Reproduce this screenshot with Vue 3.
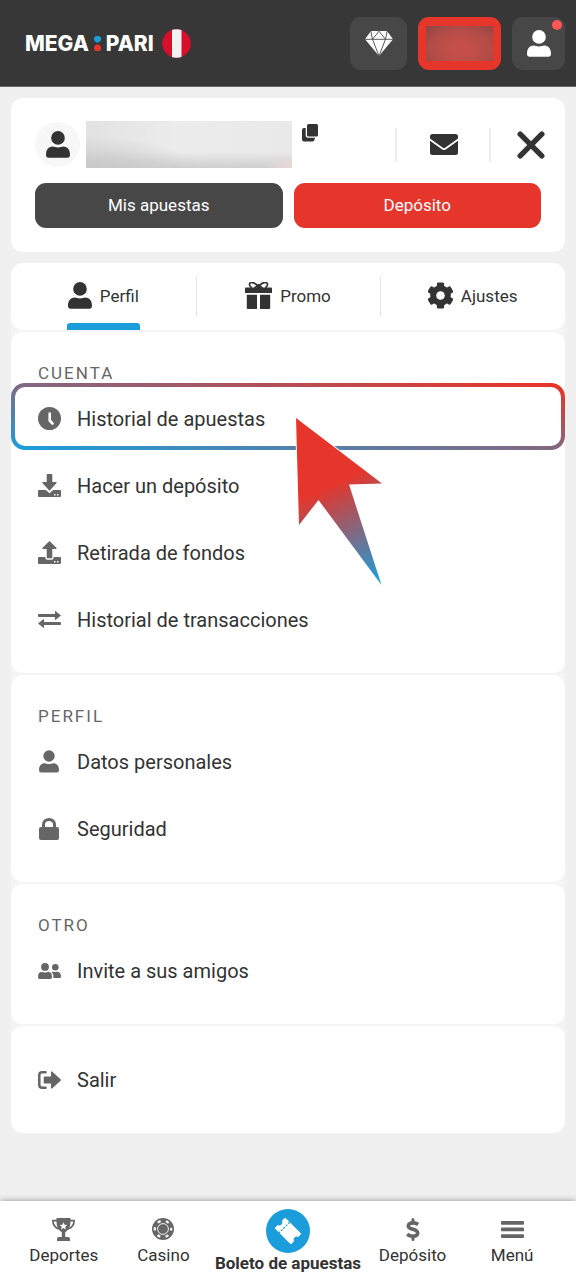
<script setup>
import { ref } from 'vue'

const tabs = [
  { id: 'perfil', label: 'Perfil', icon: 'user', w: 24, h: 27 },
  { id: 'promo', label: 'Promo', icon: 'gift', w: 27, h: 27 },
  { id: 'ajustes', label: 'Ajustes', icon: 'gear', w: 25, h: 27 },
]
const activeTab = ref('perfil')

const sections = [
  {
    title: 'CUENTA',
    items: [
      { label: 'Historial de apuestas', icon: 'clock', w: 23, h: 23, marked: true },
      { label: 'Hacer un depósito', icon: 'download', w: 23, h: 23 },
      { label: 'Retirada de fondos', icon: 'upload', w: 23, h: 23 },
      { label: 'Historial de transacciones', icon: 'swap', w: 23, h: 17 },
    ],
  },
  {
    title: 'PERFIL',
    items: [
      { label: 'Datos personales', icon: 'user', w: 20, h: 23 },
      { label: 'Seguridad', icon: 'lock', w: 20, h: 22 },
    ],
  },
  {
    title: 'OTRO',
    items: [{ label: 'Invite a sus amigos', icon: 'friends', w: 23, h: 16 }],
  },
  {
    title: '',
    items: [{ label: 'Salir', icon: 'exit', w: 23, h: 18 }],
  },
]

const nav = [
  { label: 'Deportes', icon: 'trophy', w: 23, h: 23 },
  { label: 'Casino', icon: 'chip', w: 22, h: 22 },
  { label: 'Boleto de apuestas', icon: 'ticket', w: 26, h: 26, main: true },
  { label: 'Depósito', icon: 'dollar', w: 14, h: 23 },
  { label: 'Menú', icon: 'menu', w: 23, h: 17 },
]
</script>

<template>
  <div class="page">
    <svg class="defs" aria-hidden="true">
      <symbol id="i-user" viewBox="0 0 24 27">
        <circle cx="12" cy="6.9" r="6.8" fill="currentColor" />
        <path fill="currentColor" d="M0 23.6C0 18.400 3 15.600 6.600 15.600c2 0 3 1 5.400 1s3.400-1 5.400-1C21 15.600 24 18.400 24 23.600q0 3.200-2.600 3.200H2.600Q0 26.800 0 23.600z" />
      </symbol>
      <symbol id="i-diamond" viewBox="0 0 28 25">
        <path fill="currentColor" d="M6 0h16l6 8.300L14 25 0 8.300z" />
        <path fill="none" stroke="#474747" stroke-width=".9" d="M0 8.300h28M7.500 8.300 14 25l6.500-16.700L14 .2zM5.800 0l1.700 8.300M22.200 0l-1.700 8.300" />
      </symbol>
      <symbol id="i-copy" viewBox="0 0 16 18">
        <rect x="5" y="0" width="11" height="12.500" rx="1.500" fill="currentColor" />
        <path fill="currentColor" d="M3.700 4H2Q0 4 0 6v9.500q0 2 2 2h8.500q2 0 2.500-3.700H6q-2.300 0-2.300-2.300z" />
      </symbol>
      <symbol id="i-mail" viewBox="0 0 28 21">
        <path fill="currentColor" d="M2.500 0h23Q28 0 28 2.500v2L15.500 13.500q-1.500 1-3 0L0 4.500v-2Q0 0 2.500 0z" />
        <path fill="currentColor" d="M0 6.700 11.500 15q2.500 1.800 5 0L28 6.700v11.800q0 2.500-2.500 2.500h-23Q0 21 0 18.500z" />
      </symbol>
      <symbol id="i-close" viewBox="0 0 28 28">
        <path fill="none" stroke="currentColor" stroke-width="5.400" stroke-linecap="round" d="M3.200 3.200l21.600 21.600M24.800 3.200 3.200 24.800" />
      </symbol>
      <symbol id="i-gift" viewBox="0 0 27 27">
        <path fill="none" stroke="currentColor" stroke-width="1.700" d="M13.500 5.500C11.500.5 5.500-.6 4.600 1.800c-.7 1.800 1.400 3.200 1.900 3.900M13.500 5.500c2-5 8-6.100 8.900-3.700.7 1.800-1.400 3.200-1.900 3.900M9.500 6l4-3 4 3" />
        <circle cx="13.500" cy="4.600" r="2" fill="currentColor" />
        <path fill="currentColor" d="M1 5.500h25q1 0 1 1V11H0V6.500q0-1 1-1zM1.800 12.800h10.200V27H2.800q-1 0-1-1zM15 12.800h10.200V26q0 1-1 1H15z" />
      </symbol>
      <symbol id="i-gear" viewBox="0 0 25 27">
        <g fill="currentColor">
          <circle cx="12.500" cy="13.500" r="10.300" />
          <rect x="8.900" y=".4" width="7.200" height="26.200" rx="1.400" />
          <rect x="8.900" y=".4" width="7.200" height="26.200" rx="1.400" transform="rotate(60 12.500 13.500)" />
          <rect x="8.900" y=".4" width="7.200" height="26.200" rx="1.400" transform="rotate(120 12.500 13.500)" />
        </g>
        <circle cx="12.500" cy="13.500" r="4.300" fill="#fff" />
      </symbol>
      <symbol id="i-clock" viewBox="0 0 23 23">
        <circle cx="11.500" cy="11.500" r="11.500" fill="currentColor" />
        <path fill="none" stroke="#fff" stroke-width="2.600" stroke-linecap="round" stroke-linejoin="round" d="M11.700 6.500v7l2.800 3" />
      </symbol>
      <symbol id="i-download" viewBox="0 0 23 23">
        <path fill="currentColor" d="M9.500 0h4q.8 0 .8.800V8H18q1.200 0 .4 1.200l-6.900 7.500-6.900-7.500Q3.800 8 5 8h3.700V.8q0-.8.800-.8z" />
        <path fill="currentColor" fill-rule="evenodd" d="M1 16h6.800l3.700 3.300 3.700-3.300H22q1 0 1 1v5q0 1-1 1H1q-1 0-1-1v-5q0-1 1-1zM16 20v1.500h1.500V20zM19 20v1.500h1.500V20z" />
      </symbol>
      <symbol id="i-upload" viewBox="0 0 23 23">
        <path fill="currentColor" d="M11.500 0l6.900 6.700Q19 8 18 8h-3.700v8q0 1.200-.8 1.200h-4q-.8 0-.8-1.200V8H5Q4 8 4.600 6.700z" />
        <path fill="currentColor" fill-rule="evenodd" d="M1 16h6.300q0 2.800 1.700 2.800h5q1.700 0 1.700-2.800H22q1 0 1 1v5q0 1-1 1H1q-1 0-1-1v-5q0-1 1-1zM16 20v1.500h1.500V20zM19 20v1.500h1.500V20z" />
      </symbol>
      <symbol id="i-swap" viewBox="0 0 23 17">
        <path fill="currentColor" d="M.8 3H17V.8q0-1.200 1-.4l5 4.100-5 4.100q-1 .8-1-.4V6H.8Q0 6 0 5.200V3.800Q0 3 .8 3zM22.200 11H6V8.800q0-1.200-1-.4l-5 4.100 5 4.100q1 .8 1-.4V14h16.200q.8 0 .8-.8v-1.400q0-.8-.8-.8z" />
      </symbol>
      <symbol id="i-lock" viewBox="0 0 20 22">
        <path fill="none" stroke="currentColor" stroke-width="3" d="M4.500 10V6.500a5.500 5 0 0 1 11 0V10" />
        <rect y="9" width="20" height="13" rx="2" fill="currentColor" />
      </symbol>
      <symbol id="i-friends" viewBox="0 0 23 16">
        <circle cx="7" cy="3.900" r="3.900" fill="currentColor" />
        <circle cx="17.300" cy="4.300" r="3.300" fill="currentColor" />
        <path fill="currentColor" d="M0 14q0-5 3.500-5c1.500 0 2 .5 3.500.5s2-.5 3.500-.5Q14 9 14 14q0 2-1.500 2h-11Q0 16 0 14zM13.500 9c1.500-.7 2.200 0 3.800 0s2-.3 3-.1Q23 9.700 23 13.500q0 1.500-1 1.500h-6.700q.6-3.800-1.800-6z" />
      </symbol>
      <symbol id="i-exit" viewBox="0 0 23 18">
        <path fill="none" stroke="currentColor" stroke-width="2.500" stroke-linecap="round" d="M7.500 1.300H4Q1.300 1.300 1.300 4v10q0 2.700 2.700 2.700h3.500" />
        <path fill="currentColor" d="M6.500 5.500H13V1.400q0-1.800 1.300-.6l8 7.200q1 1 0 2l-8 7.200q-1.300 1.200-1.300-.6v-4.100H6.500q-.8 0-.8-.8V6.300q0-.8.800-.8z" />
      </symbol>
      <symbol id="i-trophy" viewBox="0 0 23 23">
        <path fill="none" stroke="currentColor" stroke-width="1.700" d="M5 2.600H.9C.9 7 2.600 9.800 7 11M18 2.600h4.100c0 4.400-1.700 7.200-6.100 8.400" />
        <path fill="currentColor" d="M4.500 0h14v3.500c0 5-1.600 8.500-5.300 10.700V19h3q1.800 0 1.800 1.800V23H5v-2.200Q5 19 6.800 19h3v-4.800C6.100 12 4.500 8.500 4.500 3.500z" />
        <path fill="#fff" d="m11.500 4.200 1.100 2.500 2.700.3-2 1.800.6 2.700-2.400-1.400-2.400 1.400.6-2.700-2-1.800 2.700-.3z" />
      </symbol>
      <symbol id="i-chip" viewBox="0 0 22 22">
        <circle cx="11" cy="11" r="11" fill="currentColor" />
        <circle cx="11" cy="11" r="8.200" fill="none" stroke="#fff" stroke-width="2.200" stroke-dasharray="3.200 5.390" stroke-dashoffset="1.600" />
        <circle cx="11" cy="11" r="5.400" fill="none" stroke="#fff" stroke-width=".9" />
      </symbol>
      <symbol id="i-ticket" viewBox="0 0 26 26">
        <g transform="rotate(45 13 13)">
          <path fill="currentColor" d="M1.500 5.500h23v4.600a3 3 0 0 0 0 5.800v4.600h-23v-4.600a3 3 0 0 0 0-5.800z" />
          <path fill="none" stroke="#1c9ddb" stroke-width="1.200" stroke-dasharray="2.200 1.200" d="M8 5.500v15" />
        </g>
      </symbol>
      <symbol id="i-dollar" viewBox="0 0 14 23">
        <path fill="none" stroke="currentColor" stroke-width="3.600" d="M12.200 6.400Q9.800 4.900 7 4.900C4 4.900 2.300 6 2.300 7.900c0 4.500 9.400 2.400 9.400 7.100 0 2.100-1.900 3.200-4.700 3.200q-3.300 0-5.900-2" />
        <path fill="none" stroke="currentColor" stroke-width="3" stroke-linecap="round" d="M7 1.500v3M7 18.500v3" />
      </symbol>
      <symbol id="i-menu" viewBox="0 0 23 17">
        <g fill="currentColor">
          <rect width="23" height="3.700" rx=".9" />
          <rect y="6.600" width="23" height="3.700" rx=".9" />
          <rect y="13.200" width="23" height="3.700" rx=".9" />
        </g>
      </symbol>
    </svg>

    <header class="top">
      <a class="logo" href="#" aria-label="Megapari">
        <span>MEGA</span>
        <i class="dots" aria-hidden="true"></i>
        <span>PARI</span>
        <svg class="flag" width="29" height="29" viewBox="0 0 29 29" aria-hidden="true">
          <clipPath id="flag-round"><circle cx="14.500" cy="14.500" r="14.300" /></clipPath>
          <g clip-path="url(#flag-round)">
            <rect width="29" height="29" fill="#d80e2b" />
            <rect x="10" width="9.500" height="29" fill="#f2f2f2" />
          </g>
        </svg>
      </a>
      <div class="top-actions">
        <button class="tile diamond" aria-label="Bonos"><svg width="28" height="25"><use href="#i-diamond" /></svg></button>
        <button class="tile balance" aria-label="Saldo"><span class="balance-veil"></span></button>
        <button class="tile account" aria-label="Cuenta">
          <svg width="24" height="27"><use href="#i-user" /></svg>
          <span class="alert"></span>
        </button>
      </div>
    </header>

    <main class="content">
      <section class="card summary">
        <div class="identity">
          <span class="avatar"><svg width="24" height="27"><use href="#i-user" /></svg></span>
          <span class="name-veil"></span>
          <button class="plain copy" aria-label="Copiar"><svg width="16" height="18"><use href="#i-copy" /></svg></button>
          <button class="plain mail" aria-label="Mensajes"><svg width="28" height="21"><use href="#i-mail" /></svg></button>
          <button class="plain close" aria-label="Cerrar"><svg width="28" height="28"><use href="#i-close" /></svg></button>
        </div>
        <div class="actions">
          <button class="action dark">Mis apuestas</button>
          <button class="action red">Depósito</button>
        </div>
      </section>

      <div class="stack">
        <div class="card tabs" role="tablist">
          <button
            v-for="t in tabs"
            :key="t.id"
            class="tab"
            role="tab"
            :aria-selected="activeTab === t.id"
            @click="activeTab = t.id"
          >
            <span class="tab-inner" :class="{ active: activeTab === t.id }">
              <svg :width="t.w" :height="t.h"><use :href="'#i-' + t.icon" /></svg>
              {{ t.label }}
            </span>
          </button>
        </div>

        <section v-for="s in sections" :key="s.title" class="card group">
          <h2 v-if="s.title" class="group-title">{{ s.title }}</h2>
          <ul class="list">
            <li v-for="i in s.items" :key="i.label" class="row">
              <a href="#" class="link">
                <span class="row-icon"><svg :width="i.w" :height="i.h"><use :href="'#i-' + i.icon" /></svg></span>
                {{ i.label }}
              </a>
              <template v-if="i.marked">
                <span class="frame"></span>
                <svg class="pointer" width="90" height="172" viewBox="-2 -2 90 172" aria-hidden="true">
                  <linearGradient id="pointer-fill" gradientUnits="userSpaceOnUse" x1="38" y1="65" x2="84" y2="162">
                    <stop offset="0" stop-color="#e6352b" />
                    <stop offset="1" stop-color="#1c9ddb" />
                  </linearGradient>
                  <path fill="url(#pointer-fill)" stroke="#fff" stroke-width="2" paint-order="stroke" d="M0 0 86 65.500 53 66.500 85.500 167 22.500 82 3 107z" />
                </svg>
              </template>
            </li>
          </ul>
        </section>
      </div>
    </main>

    <nav class="bottom">
      <a v-for="n in nav" :key="n.label" href="#" class="nav-item" :class="{ main: n.main }">
        <span class="nav-icon"><svg :width="n.w" :height="n.h"><use :href="'#i-' + n.icon" /></svg></span>
        {{ n.label }}
      </a>
    </nav>
  </div>
</template>

<style>
body {
  background: #f0f0f0;
}
</style>

<style scoped>
.page {
  min-height: 100vh;
  display: flex;
  flex-direction: column;
  font-family: Roboto, "Liberation Sans", sans-serif;
  color: #333;
  background: #f0f0f0;
}
.page *,
.page *::before,
.page *::after {
  box-sizing: border-box;
}
svg {
  display: block;
  flex: none;
}
.defs {
  position: absolute;
  width: 0;
  height: 0;
}
button {
  font: inherit;
  color: inherit;
  border: 0;
  padding: 0;
  background: none;
  cursor: pointer;
}
a {
  color: inherit;
  text-decoration: none;
}

.top {
  display: flex;
  align-items: center;
  justify-content: space-between;
  height: 87px;
  padding: 0 11px 0 25px;
  background: #373737;
  border-bottom: 1px solid #6a6a6a;
}
.logo {
  display: flex;
  align-items: center;
  font-family: Inter, sans-serif;
  font-size: 21px;
  font-weight: 800;
  color: #fff;
}
.dots {
  width: 7px;
  height: 15px;
  margin: 0 5px;
  background:
    radial-gradient(circle at 50% 3px, #1c9ddb 3px, transparent 4px),
    radial-gradient(circle at 50% 12px, #e6352b 3px, transparent 4px);
}
.flag {
  margin-left: 8px;
}
.top-actions {
  display: flex;
  gap: 11px;
}
.tile {
  position: relative;
  display: flex;
  align-items: center;
  justify-content: center;
  height: 53px;
  border-radius: 11px;
  background: #474747;
  color: #fff;
}
.diamond {
  width: 57px;
}
.balance {
  width: 83px;
  padding: 9px 8px;
  background: #e6352b;
}
.balance-veil {
  width: 100%;
  height: 100%;
  background: radial-gradient(ellipse at 52% 65%, #c44f48 20%, #b34c47 60%, #8c4644 100%);
}
.account {
  width: 53px;
}
.alert {
  position: absolute;
  top: 3px;
  right: 3px;
  width: 10px;
  height: 10px;
  border-radius: 50%;
  background: #ff5757;
}

.content {
  display: flex;
  flex-direction: column;
  gap: 11px;
  padding: 11px 11px 68px;
}
.card {
  background: #fff;
  border-radius: 12px;
}
.summary {
  padding: 23px 24px 24px;
}
.identity {
  display: flex;
  align-items: center;
  height: 47px;
  margin-bottom: 15px;
}
.avatar {
  display: flex;
  align-items: center;
  justify-content: center;
  width: 45px;
  height: 45px;
  border-radius: 50%;
  background: #f7f7f7;
}
.name-veil {
  width: 206px;
  height: 47px;
  margin: 0 10px 0 6px;
  background:
    radial-gradient(ellipse 30px 14px at 100% 100%, #ecd9d9, transparent),
    radial-gradient(ellipse 110px 32px at 0 100%, #c8c8c8, transparent),
    linear-gradient(to bottom, transparent 65%, #cfcfcf),
    linear-gradient(to right, #e2e2e2, #ececec 45%, #e9e9e9);
}
.copy {
  align-self: flex-start;
  margin: 3px auto 0 0;
}
.mail,
.close {
  display: flex;
  align-items: center;
  height: 34px;
  border-left: 2px solid #ececec;
}
.mail {
  padding: 0 31px 0 33px;
}
.close {
  padding-left: 26px;
  margin-right: -4px;
}
.actions {
  display: flex;
  gap: 11px;
}
.action {
  flex: 1;
  height: 45px;
  padding-bottom: 2px;
  border-radius: 11px;
  color: #fff;
  font-size: 17px;
}
.dark {
  background: #474747;
}
.red {
  background: #e6352b;
}

.stack {
  display: flex;
  flex-direction: column;
  gap: 2px;
  border-radius: 12px;
  background: #f4f4f4;
}
.tabs {
  display: flex;
  height: 67px;
}
.tab {
  flex: 1;
  position: relative;
  display: flex;
  justify-content: center;
}
.tab + .tab::before {
  content: "";
  position: absolute;
  left: 0;
  top: 14px;
  width: 1px;
  height: 39px;
  background: #e4e4e4;
}
.tab-inner {
  position: relative;
  display: flex;
  align-items: center;
  gap: 8px;
  height: 100%;
  padding: 0 1px 2px;
  font-size: 17px;
}
.tab-inner.active::after {
  content: "";
  position: absolute;
  left: 0;
  right: 0;
  bottom: 0;
  height: 7px;
  border-radius: 3px 3px 0 0;
  background: #1c9ddb;
}

.group {
  padding: 20px 0;
}
.group-title {
  margin: 0;
  padding: 9px 27px 0;
  height: 33px;
  font-size: 17px;
  line-height: 24px;
  font-weight: 400;
  letter-spacing: 2px;
  color: #666;
}
.list {
  margin: 0;
  padding: 0;
  list-style: none;
}
.row {
  position: relative;
}
.link {
  position: relative;
  z-index: 1;
  display: flex;
  align-items: center;
  gap: 16px;
  height: 67px;
  padding: 0 26px;
  font-size: 20px;
}
.row-icon {
  display: flex;
  justify-content: center;
  width: 24px;
  color: #666;
}
.frame {
  position: absolute;
  inset: -2px 0 2px;
  border: 4px solid transparent;
  border-radius: 14px;
  background:
    linear-gradient(#fff, #fff) padding-box,
    linear-gradient(to top right, #1c9ddb 2%, #e6352b 96%) border-box;
}
.pointer {
  position: absolute;
  left: 283px;
  top: 31px;
  z-index: 2;
  pointer-events: none;
}

.bottom {
  position: sticky;
  bottom: 0;
  z-index: 3;
  margin-top: auto;
  display: grid;
  grid-template-columns: 2fr 2fr 3fr 2fr 2fr;
  height: 79px;
  padding: 0 14px;
  background: #fff;
  box-shadow: 0 0 6px rgba(0, 0, 0, 0.4);
}
.nav-item {
  display: flex;
  flex-direction: column;
  align-items: center;
  padding-top: 16px;
  font-size: 17px;
  line-height: 20px;
  white-space: nowrap;
}
.nav-icon {
  display: flex;
  align-items: center;
  justify-content: center;
  height: 24px;
  margin-bottom: 4px;
  color: #666;
}
.nav-item.main {
  padding-top: 8px;
  font-weight: 700;
}
.main .nav-icon {
  width: 44px;
  height: 44px;
  margin-bottom: 0;
  border-radius: 50%;
  background: #1c9ddb;
  color: #fff;
}
</style>
